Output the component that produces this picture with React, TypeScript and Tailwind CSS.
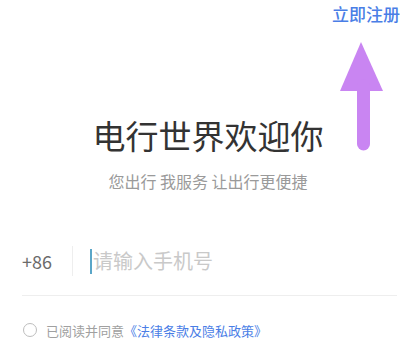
import React from "react";

export default function App() {
  return (
    <div
      className="relative w-[416px] h-[360px] bg-white overflow-hidden"
      style={{ fontFamily: '"Noto Sans CJK SC", "Noto Sans", sans-serif' }}
    >
      <div className="flex justify-end pt-[5px] pr-[16px]">
        <span className="text-[17px] leading-none font-medium text-[#4a7ee6]">立即注册</span>
      </div>

      <div className="mt-[97px] text-center text-[33px] leading-none text-[#333333]">
        电行世界欢迎你
      </div>
      <div className="mt-[21px] text-center text-[16px] leading-none text-[#9a9a9a]">
        您出行 我服务 让出行更便捷
      </div>

      <div className="mt-[51px] mx-[22px] h-[42px] flex items-center">
        <span className="w-[50px] text-[18px] leading-none text-[#6b6b6b]">+86</span>
        <div className="w-px h-[30px] bg-[#eeeeee]" />
        <div className="ml-[17px] w-[2px] h-[25px] bg-[#5aa6c8]" />
        <span className="ml-[1px] text-[20px] leading-none text-[#c9c9c9]">请输入手机号</span>
      </div>
      <div className="mt-[13px] ml-[22px] mr-[19px] h-px bg-[#eeeeee]" />

      <div className="mt-[27px] ml-[23px] flex items-center">
        <div className="w-[14px] h-[14px] rounded-full border-[1.5px] border-[#bdbdbd]" />
        <span className="ml-[9px] text-[13px] leading-none text-[#a0a0a0]">
          已阅读并同意<span className="text-[#4a7ee6]">《法律条款及隐私政策》</span>
        </span>
      </div>

      <svg
        className="absolute left-[330px] top-[36px]"
        width="60"
        height="120"
        viewBox="0 0 60 120"
      >
        <polygon points="31,6 10,55 53,55" fill="#c985f2" />
        <line x1="33.5" y1="50" x2="33.5" y2="108" stroke="#c985f2" strokeWidth="13" strokeLinecap="round" />
      </svg>
    </div>
  );
}
